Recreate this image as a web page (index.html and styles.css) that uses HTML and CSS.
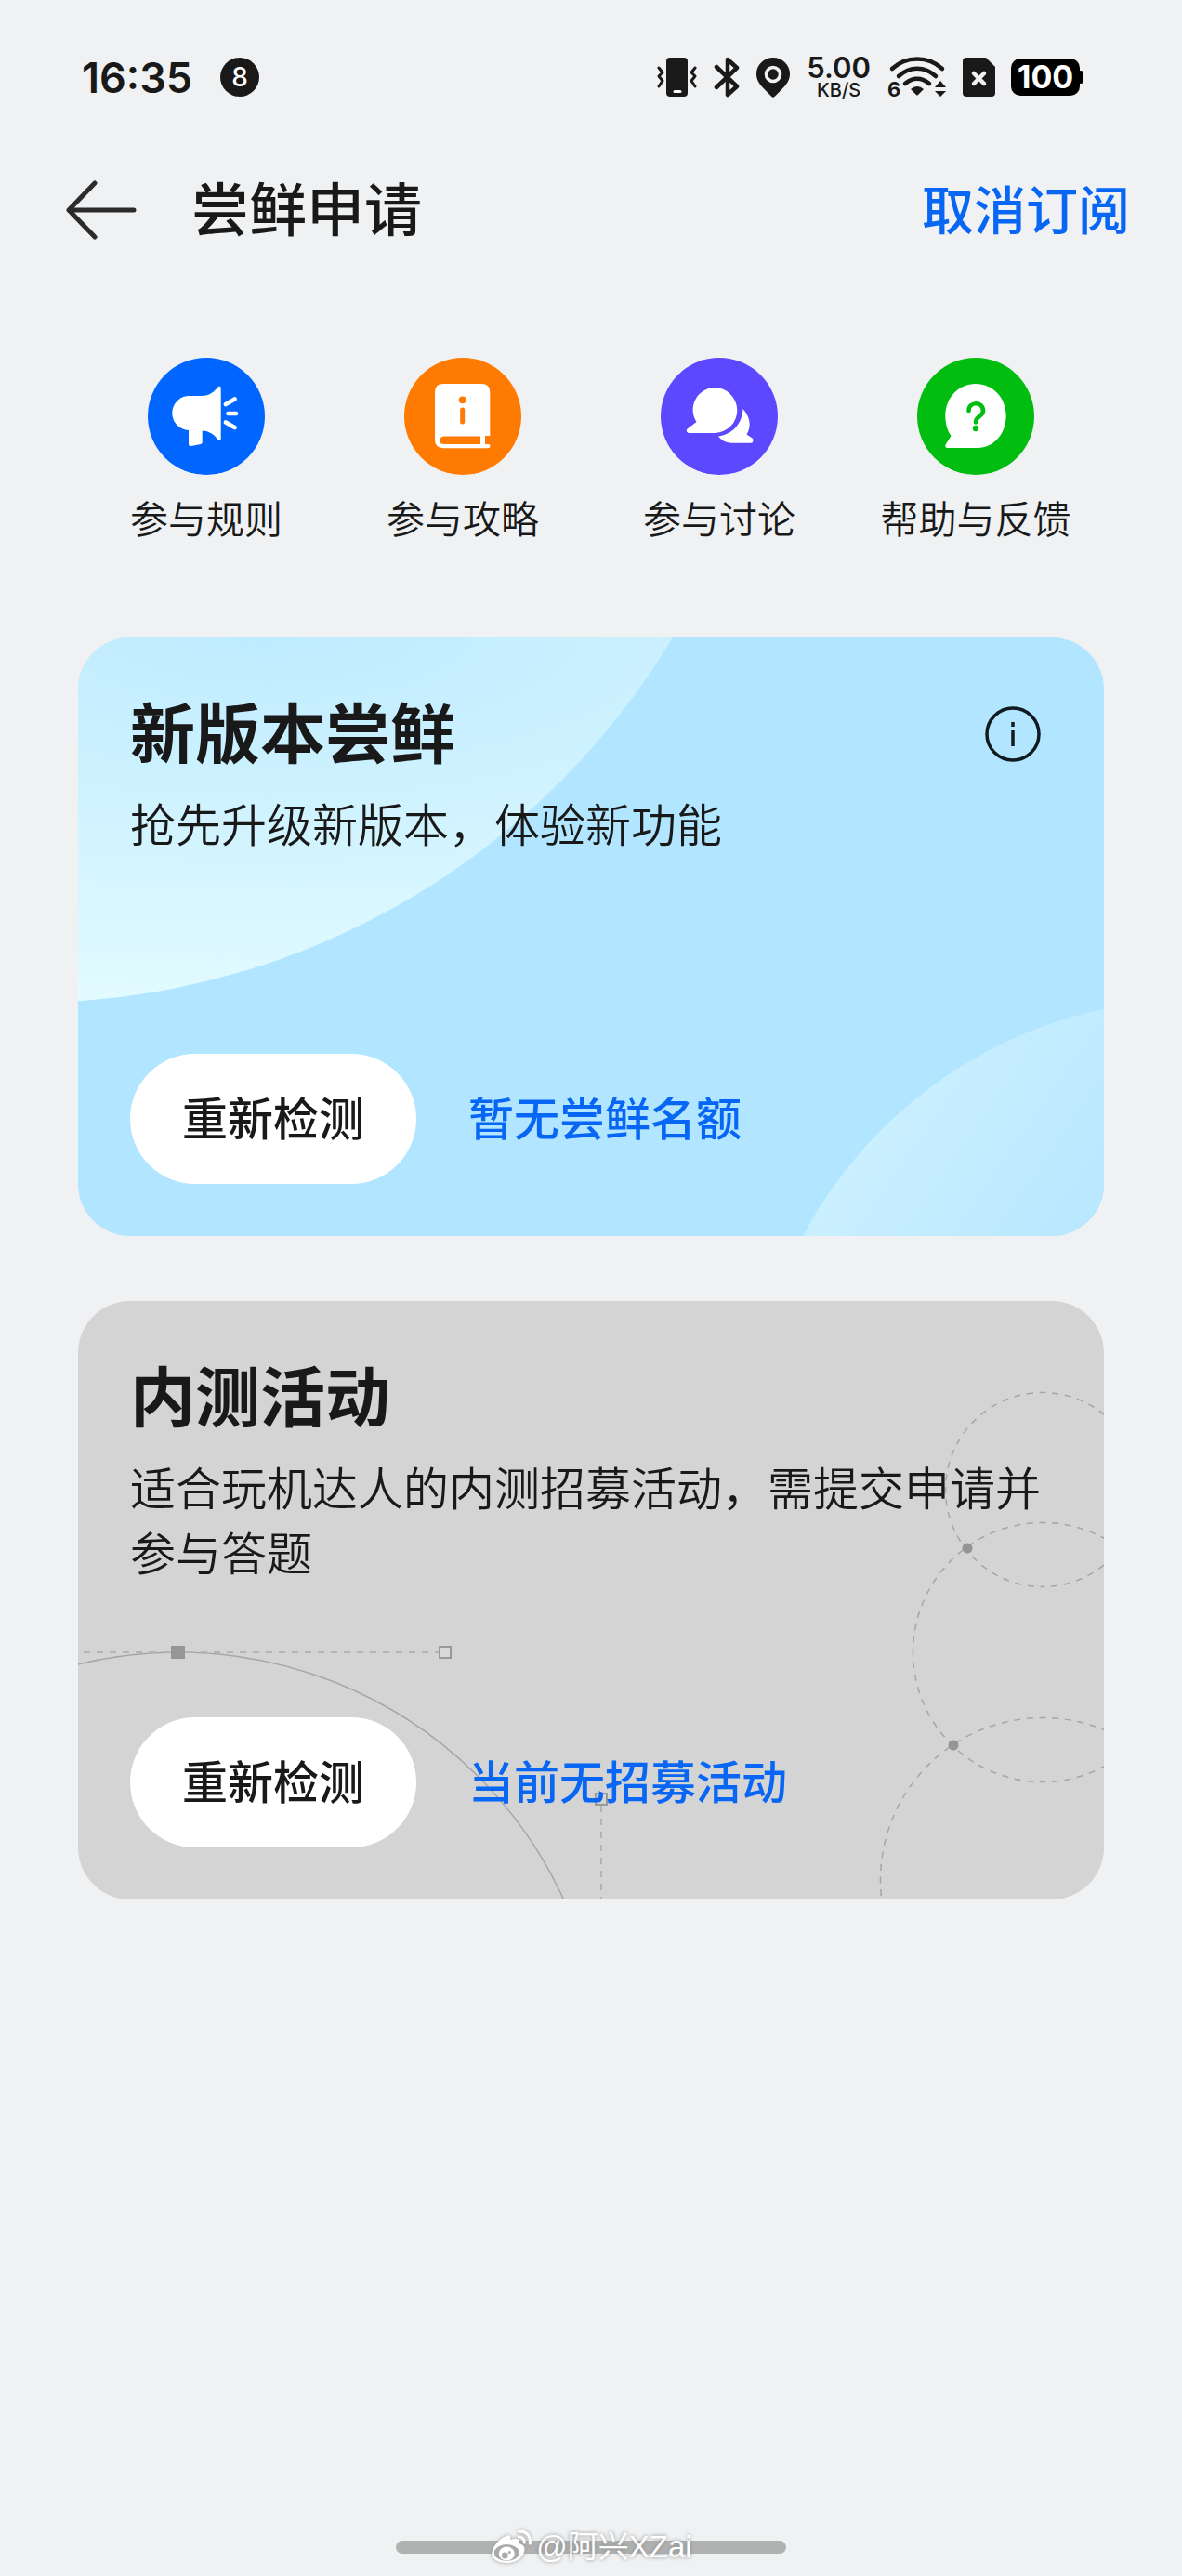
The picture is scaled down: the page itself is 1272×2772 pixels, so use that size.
FILE: index.html
```html
<!DOCTYPE html>
<html lang="zh-CN">
<head>
  <meta charset="UTF-8" />
  <meta name="viewport" content="width=device-width, initial-scale=1.0" />
  <title>尝鲜申请</title>
  <link rel="stylesheet" href="styles.css">
</head>
<body>

  <!-- 状态栏 -->
  <div class="status-bar">
    <span class="clock">16:35</span>
    <span class="badge">8</span>
    <div class="status-icons">
      <svg width="44" height="44" viewBox="0 0 44 44" fill="none" stroke="#191919" stroke-width="3" stroke-linecap="round" stroke-linejoin="round"><rect x="10" y="1" width="23" height="42" rx="4" fill="#191919" stroke="none"/><path d="M19 37.500h6" stroke="#fff"/><path d="M2 12l4 5-4 4 4 5-4 6M41 12l-4 5 4 4-4 5 4 6"/></svg>
      <svg width="28" height="44" viewBox="0 0 28 44" fill="none" stroke="#191919" stroke-width="4.500" stroke-linecap="round" stroke-linejoin="round"><path d="M3 11l22 21-10 9V3l10 9L3 33"/></svg>
      <svg width="38" height="44" viewBox="0 0 38 44"><path d="M19 1C9 1 1 9 1 18.500c0 7 4 12 9 17l7.500 7.600q1.500 1.500 3 0L28 35.500c5-5 9-10 9-17C37 9 29 1 19 1z" fill="#191919"/><circle cx="19" cy="19" r="7.500" fill="#191919" stroke="#eff1f3" stroke-width="3.600"/></svg>
      <div class="net-speed"><b>5.00</b><span>KB/S</span></div>
      <svg class="wifi" width="64" height="44" viewBox="0 0 64 44" fill="none" stroke="#191919" stroke-width="4.500" stroke-linecap="round"><path d="M6 13C21-1 45-1 60 13M13 21c12-11 28-11 40 0M20 29c8-7 18-7 26 0"/><path d="M26 35q7-6 14 0l-6 6q-1 1-2 0z" fill="#191919" stroke="none"/><path d="M58 26l6 7H52zM58 43l-6-6h12z" fill="#191919" stroke="none"/><text class="wifi-gen" x="1" y="43">6</text></svg>
      <svg width="36" height="44" viewBox="0 0 36 44"><path d="M5 1h21l10 10v28q0 4-4 4H5q-4 0-4-4V5q0-4 4-4z" fill="#191919"/><path d="M13 18l11 11M24 18L13 29" stroke="#eff1f3" stroke-width="4.500" stroke-linecap="round"/></svg>
      <span class="battery">100</span>
    </div>
  </div>

  <header class="top-bar">
    <a href="#" class="back" aria-label="返回">
      <svg width="78" height="64" viewBox="0 0 78 64" fill="none" stroke="#2b2b2b" stroke-width="5" stroke-linecap="round" stroke-linejoin="round"><path d="M32 3L4 32l28 29M4 32h70"/></svg>
    </a>
    <h1>尝鲜申请</h1>
    <button class="unsubscribe">取消订阅</button>
  </header>

  <nav class="shortcuts">
    <a href="#">
      <svg width="126" height="126" viewBox="0 0 126 126" fill="#fff"><circle cx="63" cy="63" r="63" fill="#0066ff"/><path d="M45.500 41H58c8 0 13-4 17.500-9.500 1.200-1.500 3.200-1 3.200 1V87c0 2-2 2.600-3.200 1C71 82 66 79 58.700 78.500V91q0 1.600-1.600 1.900l-10.400 2q-2.700.4-2.700-2V78A18.500 18.500 0 0 1 45.500 41z"/><path d="M84 50l9.500-5.500M86.500 60H95M84 69.500l9.500 5.500" stroke="#fff" stroke-width="4.600" stroke-linecap="round"/></svg>
      参与规则
    </a>
    <a href="#">
      <svg width="126" height="126" viewBox="0 0 126 126" fill="#ff7a00"><circle cx="63" cy="63" r="63"/><path d="M42 28h41q9.300 0 9.300 9v47H87v9h3.500q2 0 2 2t-2 2.300H42q-9-.3-9-9V37q0-9 9-9z" fill="#fff"/><path d="M43 84.500h39V93H43q-5 0-5-4t5-4.500z"/><circle cx="62.700" cy="45.300" r="3.900"/><path d="M62.700 56v13" stroke="#ff7a00" stroke-width="5" stroke-linecap="round"/></svg>
      参与攻略
    </a>
    <a href="#">
      <svg width="126" height="126" viewBox="0 0 126 126" fill="#fff"><circle cx="63" cy="63" r="63" fill="#5c48ff"/><path d="M57 32a24 24 0 0 1 1.500 49H30q-2.500-.6-2.200-3 .2-1 1.200-1.800L38.500 69A24 24 0 0 1 57 32z"/><path d="M88.500 55c7 8 10 18 4 27.500l6 4q1.600 1.300 1 3-.4 2.200-2.600 2.200H76q-9-.4-14-7.200C78 82 87.500 71 88.500 55z"/></svg>
      参与讨论
    </a>
    <a href="#">
      <svg width="126" height="126" viewBox="0 0 126 126" fill="#fff"><circle cx="63" cy="63" r="63" fill="#00bd10"/><path d="M63 28c18.500 0 32.700 15 32.700 34.500S82 97 65 97H32.500q-3-.6-1.900-3.600L36.500 84C32 78 30.300 70 30.300 62.500 30.300 43 44.500 28 63 28z"/><path d="M55.500 57c0-10 15.500-10.500 15.500 0 0 6.500-8 5.500-8 12.500" fill="none" stroke="#00bd10" stroke-width="4.600" stroke-linecap="round"/><circle cx="63" cy="76" r="3.200" fill="#00bd10"/></svg>
      帮助与反馈
    </a>
  </nav>

  <main class="cards">
    <section class="card card-blue">
      <svg class="card-art" viewBox="0 0 1104 644" preserveAspectRatio="xMidYMid slice">
        <defs>
          <radialGradient id="glow" gradientUnits="userSpaceOnUse" cx="0" cy="0" r="1" gradientTransform="translate(200 -10) scale(1200 410)">
            <stop offset="0" stop-color="#beebff"/>
            <stop offset="1" stop-color="#e2fbff"/>
          </radialGradient>
          <linearGradient id="fade" gradientUnits="userSpaceOnUse" x1="860" y1="480" x2="1090" y2="640">
            <stop offset="0" stop-color="#ccf0ff"/>
            <stop offset="1" stop-color="#b8e7ff"/>
          </linearGradient>
        </defs>
        <circle cx="-54" cy="-416" r="809" fill="url(#glow)"/>
        <circle cx="1204" cy="869" r="480" fill="url(#fade)"/>
      </svg>
      <div class="card-head">
        <h2>新版本尝鲜</h2>
        <button class="info" aria-label="说明">
          <svg width="60" height="60" viewBox="0 0 60 60" fill="none" stroke="#111a1f" stroke-width="3.500"><circle cx="30" cy="30" r="28"/><path d="M30 26v17M30 17v5"/></svg>
        </button>
      </div>
      <p>抢先升级新版本，体验新功能</p>
      <div class="card-actions">
        <button class="recheck">重新检测</button>
        <span class="result">暂无尝鲜名额</span>
      </div>
    </section>

    <section class="card card-gray">
      <svg class="card-art" viewBox="0 0 1104 644" preserveAspectRatio="xMidYMid slice" fill="none" stroke="#a6a6a6" stroke-width="2">
        <circle cx="108" cy="834" r="456" stroke-width="1.500"/>
        <path d="M6 378h382M563 543v101" stroke="#b4b4b4" stroke-dasharray="7 7"/>
        <rect x="100" y="371" width="15" height="14" fill="#969696" stroke="none"/>
        <rect x="389" y="372" width="12" height="12" fill="#d9d9d9" stroke="#999"/>
        <rect x="557" y="530" width="12" height="12" stroke="#999"/>
        <g stroke-width="1.500" stroke-dasharray="7 6.700" stroke-dashoffset="3.500">
          <path d="M1038 98.500a104.500 104.500 0 0 1 0 209M1038 98.500a104.500 104.500 0 0 0 0 209"/>
          <path d="M1038 238.500a139.500 139.500 0 0 1 0 279M1038 238.500a139.500 139.500 0 0 0 0 279"/>
          <path d="M1038 448.500a174.500 174.500 0 0 1 0 349M1038 448.500a174.500 174.500 0 0 0 0 349"/>
        </g>
        <g fill="#949494" stroke="none"><circle cx="957" cy="266" r="5.500"/><circle cx="942" cy="478" r="5.500"/></g>
      </svg>
      <div class="card-head">
        <h2>内测活动</h2>
      </div>
      <p>适合玩机达人的内测招募活动，需提交申请并参与答题</p>
      <div class="card-actions">
        <button class="recheck">重新检测</button>
        <span class="result">当前无招募活动</span>
      </div>
    </section>
  </main>

  <!-- 底部手势条 + 水印 -->
  <footer class="bottom">
    <div class="gesture-bar"></div>
    <div class="watermark">
      <svg width="46" height="40" viewBox="0 0 46 40" fill="#fff"><path d="M17 8c4-2 6 0 5 4 6-2 11-1 9 4 4 1 7 3 6 8-1 7-9 13-19 13C9 37 2 33 2 27 2 20 10 11 17 8z"/><ellipse cx="18" cy="26" rx="13.500" ry="9" fill="#a9abab"/><ellipse cx="18" cy="27" rx="8.500" ry="7.500"/><circle cx="16" cy="29" r="3.400" fill="#a9abab"/><circle cx="21" cy="25.500" r="1.500" fill="#a9abab"/><path d="M31 3c8-1 13 5 12 13M31 9c4 0 6 3 6 6" fill="none" stroke="#fff" stroke-width="3" stroke-linecap="round"/></svg>
      <span>@阿兴XZai</span>
    </div>
  </footer>

</body>
</html>
```
FILE: styles.css
```css
* {
  box-sizing: border-box;
}

body {
  margin: 0;
  min-height: 100vh;
  display: flex;
  flex-direction: column;
  background: #eff1f3;
  color: #191919;
  font-family: "Noto Sans CJK SC", sans-serif;
}

h1, h2, p {
  margin: 0;
}

a {
  color: inherit;
  text-decoration: none;
}

button {
  border: none;
  padding: 0;
  background: none;
  color: inherit;
  font-family: inherit;
  cursor: pointer;
}

svg {
  display: block;
}

/* 状态栏 */
.status-bar {
  display: flex;
  align-items: center;
  height: 166px;
  padding: 0 106px 0 88px;
  font-family: Inter, sans-serif;
}

.clock {
  font-size: 45px;
  font-weight: 600;
}

.badge {
  width: 42px;
  height: 42px;
  margin-left: 30px;
  border-radius: 50%;
  background: #191919;
  color: #fff;
  font-size: 28px;
  font-weight: 500;
  line-height: 42px;
  text-align: center;
}

.status-icons {
  display: flex;
  align-items: center;
  gap: 17px;
  margin-left: auto;
}

.net-speed {
  display: flex;
  flex-direction: column;
  align-items: center;
  font-size: 20px;
  font-weight: 500;
  line-height: 20px;
}

.net-speed b {
  font-size: 31px;
  font-weight: 600;
  line-height: 28px;
}

.wifi {
  overflow: visible;
}

.wifi-gen {
  fill: #191919;
  stroke: none;
  font-size: 22px;
  font-weight: 700;
}

.battery {
  position: relative;
  width: 74px;
  height: 40px;
  margin-right: 4px;
  border-radius: 10px;
  background: #000;
  color: #fff;
  font-size: 34px;
  font-weight: 700;
  line-height: 40px;
  text-align: center;
}

.battery::after {
  content: "";
  position: absolute;
  top: 13px;
  right: -4px;
  width: 6px;
  height: 14px;
  border-radius: 3px;
  background: #000;
}

/* 标题栏 */
.top-bar {
  display: flex;
  align-items: center;
  height: 120px;
  padding: 0 56px 0 70px;
}

.top-bar h1 {
  margin-left: 58px;
  padding-bottom: 8px;
  font-size: 62px;
  font-weight: 500;
  line-height: 80px;
}

.unsubscribe {
  margin-left: auto;
  padding-bottom: 8px;
  color: #0866f5;
  font-size: 56px;
  font-weight: 500;
}

/* 快捷入口 */
.shortcuts {
  display: grid;
  grid-template-columns: repeat(4, 1fr);
  padding: 99px 84px 101px;
}

.shortcuts a {
  display: flex;
  flex-direction: column;
  align-items: center;
  gap: 16px;
  font-size: 41px;
  font-weight: 350;
  line-height: 58px;
}

/* 卡片 */
.cards {
  display: flex;
  flex-direction: column;
  gap: 70px;
  padding: 0 84px;
}

.card {
  position: relative;
  display: flex;
  flex-direction: column;
  min-height: 644px;
  padding: 56px;
  border-radius: 56px;
  overflow: hidden;
}

.card-blue {
  background: #b2e5ff;
}

.card-gray {
  background: #d4d4d4;
}

.card-art {
  position: absolute;
  inset: 0;
  width: 100%;
  height: 100%;
}

.card-head,
.card p,
.card-actions {
  position: relative;
}

.card-head {
  display: flex;
  align-items: center;
  justify-content: space-between;
  height: 96px;
}

.card h2 {
  padding-bottom: 8px;
  font-size: 70px;
  font-weight: 700;
  line-height: 88px;
}

.info {
  display: flex;
  justify-content: center;
  width: 84px;
}

.card p {
  margin-top: 12px;
  font-size: 49px;
  font-weight: 350;
  line-height: 70px;
}

.card-actions {
  display: flex;
  align-items: center;
  gap: 56px;
  margin-top: auto;
}

.recheck {
  height: 140px;
  padding: 0 56px 8px;
  border-radius: 70px;
  background: #fff;
  font-size: 49px;
  font-weight: 500;
}

.result {
  padding-bottom: 8px;
  color: #0866f5;
  font-size: 49px;
  font-weight: 500;
}

/* 底部 */
.bottom {
  position: relative;
  display: flex;
  justify-content: center;
  margin-top: auto;
  padding-bottom: 24px;
}

.gesture-bar {
  width: 33%;
  height: 14px;
  border-radius: 7px;
  background: #b0b2b2;
}

.watermark {
  position: absolute;
  bottom: 8px;
  left: 50%;
  display: flex;
  align-items: center;
  gap: 4px;
  transform: translateX(-50%);
  color: #fff;
  font-family: "Liberation Sans", "Noto Sans CJK SC", sans-serif;
  font-size: 33px;
  line-height: 46px;
  white-space: nowrap;
  text-shadow: 0 0 4px #888;
}

.watermark svg {
  filter: drop-shadow(0 0 2px #999);
}
```
